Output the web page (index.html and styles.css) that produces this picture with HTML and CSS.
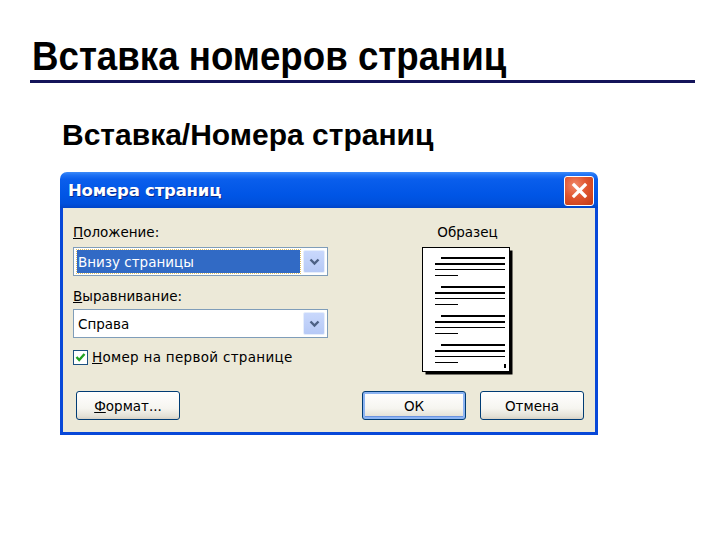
FILE: index.html
```html
<!DOCTYPE html>
<html lang="ru">
<head>
<meta charset="utf-8">
<title>Вставка номеров страниц</title>
<link rel="stylesheet" href="styles.css">
</head>
<body>
<div class="slide">
  <h1 class="title"><span class="title-text">Вставка номеров страниц</span></h1>
  <div class="rule"></div>
  <h2 class="subtitle">Вставка/Номера страниц</h2>
  <div class="dialog">
    <div class="titlebar">
      <span class="caption">Номера страниц</span>
      <span class="close">
        <svg width="17" height="17" viewBox="0 0 17 17"><path d="M3 3 L14 14 M14 3 L3 14" stroke="#fff" stroke-width="3.2" stroke-linecap="square"/></svg>
      </span>
    </div>
    <div class="body">
      <div class="top">
        <div class="fields">
          <div class="label label1"><u>П</u>оложение:</div>
          <div class="combo">
            <div class="value"><span class="sel">Внизу страницы</span></div>
            <div class="drop"><svg width="11" height="8" viewBox="0 0 11 8"><path d="M1.5 1.5 L5.5 5.5 L9.5 1.5" fill="none" stroke="#4d6185" stroke-width="2.4"/></svg></div>
          </div>
          <div class="label label2"><u>В</u>ыравнивание:</div>
          <div class="combo">
            <div class="value">Справа</div>
            <div class="drop"><svg width="11" height="8" viewBox="0 0 11 8"><path d="M1.5 1.5 L5.5 5.5 L9.5 1.5" fill="none" stroke="#4d6185" stroke-width="2.4"/></svg></div>
          </div>
          <div class="check">
            <span class="box"><svg width="11" height="11" viewBox="0 0 11 11"><path d="M1.5 5 L4.2 8 L9.5 2" fill="none" stroke="#21a121" stroke-width="2.4"/></svg></span>
            <span class="check-text"><u>Н</u>омер на первой странице</span>
          </div>
        </div>
        <div class="preview">
          <div class="plabel">Образец</div>
          <svg class="page" width="91" height="128" viewBox="0 0 91 128">
            <rect x="3.5" y="3.5" width="87" height="124" fill="#000"/>
            <rect x="0.5" y="0.5" width="87" height="124" fill="#fff" stroke="#000"/>
            <g fill="#000">
              <rect x="19" y="10" width="64" height="2"/>
              <rect x="13" y="16" width="70" height="2"/>
              <rect x="13" y="22" width="70" height="1"/>
              <rect x="13" y="28" width="23" height="1"/>
              <rect x="19" y="39" width="64" height="2"/>
              <rect x="13" y="45" width="70" height="2"/>
              <rect x="13" y="51" width="70" height="1"/>
              <rect x="13" y="57" width="23" height="1"/>
              <rect x="19" y="68" width="64" height="2"/>
              <rect x="13" y="74" width="70" height="2"/>
              <rect x="13" y="80" width="70" height="1"/>
              <rect x="13" y="86" width="23" height="1"/>
              <rect x="19" y="97" width="64" height="2"/>
              <rect x="13" y="103" width="70" height="2"/>
              <rect x="13" y="109" width="70" height="1"/>
              <rect x="13" y="115" width="23" height="1"/>
              <rect x="82" y="117" width="2" height="4"/>
            </g>
          </svg>
        </div>
      </div>
      <div class="buttons">
        <button class="btn"><u>Ф</u>ормат...</button>
        <div class="btn-group">
          <button class="btn btn-default">ОК</button>
          <button class="btn">Отмена</button>
        </div>
      </div>
    </div>
  </div>
</div>
</body>
</html>
```
FILE: styles.css
```css
html, body {
  margin: 0;
  padding: 0;
  background: #fff;
}
.slide {
  width: 720px;
  height: 540px;
  font-family: "Liberation Sans", Arial, sans-serif;
  color: #000;
  padding-top: 34px;
  box-sizing: border-box;
}
.title {
  margin: 0 0 0 32px;
  font-size: 40px;
  line-height: 44px;
  font-weight: bold;
  white-space: nowrap;
}
.title-text {
  display: inline-block;
  transform: scaleX(0.917);
  transform-origin: 0 50%;
}
.rule {
  margin: 2px 25px 0 30px;
  height: 3px;
  background: #14145a;
}
.subtitle {
  margin: 35px 0 0 62px;
  font-size: 30px;
  line-height: 34px;
  font-weight: bold;
}
.dialog {
  margin: 20px 0 0 60px;
  width: 538px;
  font-family: "DejaVu Sans", Tahoma, sans-serif;
  font-size: 13.5px;
}
.titlebar {
  height: 36px;
  box-sizing: border-box;
  border-radius: 7px 7px 0 0;
  background: linear-gradient(#3d8bf8 0%, #1f72f4 8%, #0a5eec 20%, #0055e5 65%, #0050dc 88%, #0044c8 100%);
  display: flex;
  align-items: center;
  justify-content: space-between;
  padding: 1px 4px 0 8px;
}
.caption {
  color: #fff;
  font-weight: bold;
  font-size: 16.5px;
  letter-spacing: -0.2px;
  text-shadow: 1px 1px 0 #0a2a8c;
}
.close {
  width: 28px;
  height: 28px;
  border: 1px solid #fff;
  border-radius: 3px;
  background: radial-gradient(circle at 35% 30%, #f0896a 0%, #e0552f 45%, #c23a14 100%);
  display: flex;
  align-items: center;
  justify-content: center;
}
.body {
  background: #ece9d8;
  border: 3px solid #0848d8;
  border-top: none;
  padding: 15px 11px 12px 10px;
}
.top {
  display: flex;
  gap: 94px;
}
.fields {
  width: 255px;
}
.label {
  height: 20px;
  line-height: 18px;
}
.label1 {
  margin-bottom: 4px;
}
.label2 {
  margin-top: 11px;
  margin-bottom: 2px;
}
.combo {
  height: 29px;
  box-sizing: border-box;
  border: 1px solid #7f9db9;
  background: #fff;
  display: flex;
  padding: 2px;
}
.value {
  flex: 1;
  display: flex;
  align-items: center;
  padding-left: 2px;
  line-height: 18px;
}
.sel {
  align-self: stretch;
  display: flex;
  align-items: center;
  background: #316ac5;
  color: #fff;
  margin-left: -1px;
  margin-right: 3px;
  padding-left: 1px;
  flex: 1;
  outline: 1px dotted #e0c060;
}
.drop {
  width: 22px;
  background: linear-gradient(#c9d8fc, #b6c9f6);
  border: 1px solid #e6eefc;
  box-sizing: border-box;
  border-radius: 2px;
  display: flex;
  align-items: center;
  justify-content: center;
}
.check {
  margin-top: 10px;
  display: flex;
  align-items: center;
  gap: 4px;
  height: 18px;
}
.check-text {
  letter-spacing: 0.3px;
}
.box {
  width: 13px;
  height: 13px;
  border: 1px solid #1c5180;
  background: #fff;
  display: flex;
  align-items: center;
  justify-content: center;
}
.preview {
  width: 91px;
  display: flex;
  flex-direction: column;
  align-items: center;
}
.plabel {
  height: 20px;
  line-height: 18px;
  margin-bottom: 4px;
}
.page {
  display: block;
}
.buttons {
  margin-top: 16px;
  display: flex;
  justify-content: space-between;
  padding-left: 3px;
}
.btn-group {
  display: flex;
  gap: 14px;
}
.btn {
  font-family: "DejaVu Sans", Tahoma, sans-serif;
  font-size: 13.5px;
  color: #000;
  width: 104px;
  height: 29px;
  border: 1px solid #003c74;
  border-radius: 3px;
  background: linear-gradient(#ffffff 0%, #f6f5f0 60%, #e3e1d6 90%, #d6d0c5 100%);
  padding: 0;
  display: flex;
  align-items: center;
  justify-content: center;
}
.btn-default {
  box-shadow: inset 0 0 0 2px #8cb4f2, inset 0 -1px 0 2px #6b93e0;
}
```
